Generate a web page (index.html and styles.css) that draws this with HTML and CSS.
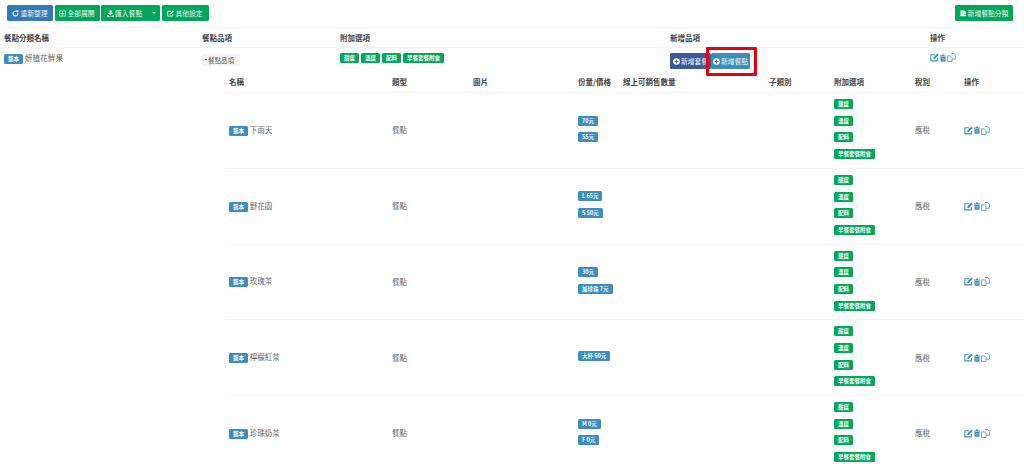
FILE: index.html
```html
<!DOCTYPE html>
<html lang="zh-Hant">
<head>
<meta charset="utf-8">
<title>餐點管理</title>
<link rel="stylesheet" href="styles.css">
</head>
<body>
<svg class="defs" width="0" height="0" aria-hidden="true">
  <symbol id="i-edit" viewBox="0 0 16 16"><path d="M13 9v5H1.500V3H9" fill="none" stroke="currentColor" stroke-width="1.800"/><path d="M6 10.500V8l7-7 2.500 2.500-7 7z" fill="currentColor"/></symbol>
  <symbol id="i-trash" viewBox="0 0 12 16"><path d="M0 3h4V1h4v2h4v2H0zM1 6h10v9.500H1z" fill="currentColor"/><path d="M4 8v5M6 8v5M8 8v5" stroke="#fff" stroke-width=".7"/></symbol>
  <symbol id="i-copy" viewBox="0 0 16 16"><path d="M1 5h5l3 3v7H1zM7 1h5l3 3v7H9" fill="none" stroke="currentColor" stroke-width="1.300"/></symbol>
  <symbol id="i-plus" viewBox="0 0 16 16"><circle cx="8" cy="8" r="7.500" fill="currentColor"/><path d="M4 8h8M8 4v8" stroke="#3c6ea8" stroke-width="2.500"/></symbol>
  <symbol id="i-refresh" viewBox="0 0 16 16"><path d="M13.500 8A5.500 5.500 0 1 1 11 3.400" fill="none" stroke="currentColor" stroke-width="2.600"/><path d="M9 0l6 1-1 6z" fill="currentColor"/></symbol>
  <symbol id="i-expand" viewBox="0 0 16 16"><path d="M1 2h14v12H1zM8 2v12M3.500 8h9" fill="none" stroke="currentColor" stroke-width="1.500"/></symbol>
  <symbol id="i-import" viewBox="0 0 16 16"><path d="M5.500 1h5v6H14l-6 5-6-5h3.500zM0 12h3l2 2h6l2-2h3v3.500H0z" fill="currentColor"/></symbol>
  <symbol id="i-add" viewBox="0 0 16 16"><path d="M1 1h9l4 4v4h-4v5H1z" fill="currentColor"/><path d="M3.500 5h5M3.500 8h4" stroke="#00a65a" stroke-width="1"/><path d="M12 10v5M9.500 12.500h5" stroke="currentColor" stroke-width="1.600"/></symbol>
</svg>

<header class="toolbar">
  <div class="toolbar-group">
    <button class="btn btn-blue btn-refresh"><svg class="ico"><use href="#i-refresh"/></svg>重新整理</button>
    <button class="btn btn-green btn-expand"><svg class="ico"><use href="#i-expand"/></svg>全部展開</button>
    <button class="btn btn-green btn-import"><svg class="ico"><use href="#i-import"/></svg>匯入餐點<span class="caret"></span></button>
    <button class="btn btn-green btn-other"><svg class="ico"><use href="#i-edit"/></svg>其他設定</button>
  </div>
  <button class="btn btn-green btn-new-cat"><svg class="ico"><use href="#i-add"/></svg>新增餐點分類</button>
</header>

<table class="outer">
  <colgroup><col class="oc1"><col class="oc2"><col class="oc3"><col class="oc4"><col class="oc5"></colgroup>
  <thead>
    <tr><th>餐點分類名稱</th><th>餐點品項</th><th>附加選項</th><th>新增品項</th><th>操作</th></tr>
  </thead>
  <tbody>
    <tr>
      <td><span class="badge blue">範本</span> <span class="cat-name">妍植花鮮果</span></td>
      <td><button class="btn-items"><span class="caret-down"></span>餐點品項</button></td>
      <td><div class="tags"><span class="badge green">甜度</span><span class="badge green">溫度</span><span class="badge green">配料</span><span class="badge green">早餐套餐附食</span></div></td>
      <td>
        <div class="add-buttons">
          <button class="btn btn-navy btn-set"><svg class="ico"><use href="#i-plus"/></svg>新增套餐</button>
          <span class="highlighted"><button class="btn btn-sky btn-item"><svg class="ico"><use href="#i-plus"/></svg>新增餐點</button></span>
        </div>
      </td>
      <td><div class="ops"><svg class="op-edit"><use href="#i-edit"/></svg><svg class="op-trash"><use href="#i-trash"/></svg><svg class="op-copy"><use href="#i-copy"/></svg></div></td>
    </tr>
  </tbody>
</table>

<table class="inner">
  <colgroup><col class="c1"><col class="c2"><col class="c3"><col class="c4"><col class="c5"><col class="c6"><col class="c7"><col class="c8"><col class="c9"></colgroup>
  <thead>
    <tr><th>名稱</th><th>類型</th><th>圖片</th><th>份量/價格</th><th>線上可銷售數量</th><th>子類別</th><th>附加選項</th><th>稅別</th><th>操作</th></tr>
  </thead>
  <tbody>
    <tr>
      <td><span class="badge blue">範本</span> 下雨天</td><td>餐點</td><td></td>
      <td><div class="prices"><span class="badge blue">70元</span><span class="badge blue">55元</span></div></td>
      <td></td><td></td>
      <td><div class="addons"><span class="badge green">甜度</span><span class="badge green">溫度</span><span class="badge green">配料</span><span class="badge green">早餐套餐附食</span></div></td>
      <td>應稅</td>
      <td><div class="ops"><svg class="op-edit"><use href="#i-edit"/></svg><svg class="op-trash"><use href="#i-trash"/></svg><svg class="op-copy"><use href="#i-copy"/></svg></div></td>
    </tr>
    <tr>
      <td><span class="badge blue">範本</span> 野花園</td><td>餐點</td><td></td>
      <td><div class="prices"><span class="badge blue">L 65元</span><span class="badge blue">S 50元</span></div></td>
      <td></td><td></td>
      <td><div class="addons"><span class="badge green">甜度</span><span class="badge green">溫度</span><span class="badge green">配料</span><span class="badge green">早餐套餐附食</span></div></td>
      <td>應稅</td>
      <td><div class="ops"><svg class="op-edit"><use href="#i-edit"/></svg><svg class="op-trash"><use href="#i-trash"/></svg><svg class="op-copy"><use href="#i-copy"/></svg></div></td>
    </tr>
    <tr>
      <td><span class="badge blue">範本</span> 玫瑰茶</td><td>餐點</td><td></td>
      <td><div class="prices"><span class="badge blue">30元</span><span class="badge blue">加珍珠 7元</span></div></td>
      <td></td><td></td>
      <td><div class="addons"><span class="badge green">甜度</span><span class="badge green">溫度</span><span class="badge green">配料</span><span class="badge green">早餐套餐附食</span></div></td>
      <td>應稅</td>
      <td><div class="ops"><svg class="op-edit"><use href="#i-edit"/></svg><svg class="op-trash"><use href="#i-trash"/></svg><svg class="op-copy"><use href="#i-copy"/></svg></div></td>
    </tr>
    <tr>
      <td><span class="badge blue">範本</span> 檸檬紅茶</td><td>餐點</td><td></td>
      <td><div class="prices"><span class="badge blue">大杯 60元</span></div></td>
      <td></td><td></td>
      <td><div class="addons"><span class="badge green">甜度</span><span class="badge green">溫度</span><span class="badge green">配料</span><span class="badge green">早餐套餐附食</span></div></td>
      <td>應稅</td>
      <td><div class="ops"><svg class="op-edit"><use href="#i-edit"/></svg><svg class="op-trash"><use href="#i-trash"/></svg><svg class="op-copy"><use href="#i-copy"/></svg></div></td>
    </tr>
    <tr>
      <td><span class="badge blue">範本</span> 珍珠奶茶</td><td>餐點</td><td></td>
      <td><div class="prices"><span class="badge blue">M 0元</span><span class="badge blue">F 0元</span></div></td>
      <td></td><td></td>
      <td><div class="addons"><span class="badge green">甜度</span><span class="badge green">溫度</span><span class="badge green">配料</span><span class="badge green">早餐套餐附食</span></div></td>
      <td>應稅</td>
      <td><div class="ops"><svg class="op-edit"><use href="#i-edit"/></svg><svg class="op-trash"><use href="#i-trash"/></svg><svg class="op-copy"><use href="#i-copy"/></svg></div></td>
    </tr>
  </tbody>
</table>
</body>
</html>
```

FILE: styles.css
```css
html, body {
  margin: 0;
  padding: 0;
  background: #fff;
  overflow: hidden;
  height: 471px;
}
body {
  font-family: "Noto Sans CJK TC", "Noto Sans", sans-serif;
  font-size: 7.500px;
  line-height: 10px;
  color: #666;
}
.defs { position: absolute; }

/* toolbar */
.toolbar {
  display: flex;
  justify-content: space-between;
  align-items: flex-start;
  height: 27px;
  box-sizing: border-box;
  padding: 5px 11px 0 7px;
}
.toolbar-group { display: flex; gap: 1.500px; }
.btn {
  display: inline-flex;
  align-items: center;
  justify-content: center;
  height: 16px;
  padding: 0;
  border: 0;
  border-radius: 1.500px;
  font: inherit;
  font-size: 6.800px;
  color: #e8f5ee;
  white-space: nowrap;
}
.ico { width: 7px; height: 7px; margin-right: 1px; flex: none; color: #fff; }
.btn-blue { background: #337ab7; }
.btn-green { background: #00a65a; }
.btn-navy { background: #3b5998; }
.btn-sky { background: #3c8dbc; }
.btn-refresh { width: 46px; }
.btn-expand { width: 45px; }
.btn-import { width: 59px; justify-content: flex-start; padding-left: 6px; box-sizing: border-box; }
.btn-other { width: 47px; }
.btn-new-cat { width: 58px; }
.caret {
  margin-left: 10px;
  border-left: 2px solid transparent;
  border-right: 2px solid transparent;
  border-top: 2px solid #fff;
}

/* tables */
table {
  border-collapse: collapse;
  table-layout: fixed;
}
th {
  text-align: left;
  font-weight: 700;
  color: #444;
  padding: 0 4px;
}
td { padding: 0 4px; vertical-align: middle; }

.outer { width: 1024px; }
.outer thead tr { height: 20px; border-top: 1px solid #f4f4f4; border-bottom: 1px solid #f4f4f4; }
.outer tbody tr { height: 25px; }
.outer tbody td { vertical-align: top; padding-top: 5px; }
.oc1 { width: 198px; }
.oc2 { width: 138px; }
.oc3 { width: 330px; }
.oc4 { width: 260px; }

.inner { width: 799px; margin-left: 225px; }
.inner thead tr { height: 20px; border-bottom: 1px solid #f4f4f4; }
.inner tbody tr { height: 75.750px; border-bottom: 1px solid #f4f4f4; }
.c1 { width: 163px; }
.c2 { width: 81px; }
.c3 { width: 105px; }
.c4 { width: 45px; }
.c5 { width: 146px; }
.c6 { width: 65px; }
.c7 { width: 81px; }
.c8 { width: 49px; }

/* badges */
.badge {
  display: inline-block;
  height: 10px;
  line-height: 10px;
  padding: 0 4px;
  border-radius: 1.500px;
  font-size: 5.500px;
  font-weight: 700;
  color: #fff;
  white-space: nowrap;
  vertical-align: middle;
}
.blue { background: #3c8dc0; }
.green { background: #05a85a; }
.tags { display: flex; gap: 2px; }
.cat-name { font-size: 7.700px; }
.prices, .addons {
  display: flex;
  flex-direction: column;
  align-items: flex-start;
  gap: 6.700px;
}
.prices { padding-bottom: 3px; }
.addons { padding: 6px 0 8.500px; }

/* outer row controls */
.btn-items {
  display: inline-flex;
  align-items: center;
  height: 12px;
  width: 38px;
  padding: 0 0 0 3px;
  border: 0;
  border-radius: 1.500px;
  background: #f4f4f4;
  font: inherit;
  font-size: 6.500px;
  color: #555;
  white-space: nowrap;
}
.caret-down {
  margin-right: 1px;
  border-left: 1.500px solid transparent;
  border-right: 1.500px solid transparent;
  border-top: 2px solid #444;
}
.add-buttons { display: flex; }
.btn-set { width: 41px; }
.btn-item { width: 39px; }
.highlighted { position: relative; display: block; }
.highlighted::after {
  content: "";
  position: absolute;
  inset: -6px -7px -7px -5px;
  border: 3.500px solid #e60012;
  border-radius: 1px;
  pointer-events: none;
}

/* action icons */
.ops { display: flex; align-items: center; gap: 1px; color: #3c8dbc; }
.op-edit { width: 9px; height: 9px; }
.op-trash { width: 6px; height: 8px; }
.op-copy { width: 9px; height: 9px; }
```
